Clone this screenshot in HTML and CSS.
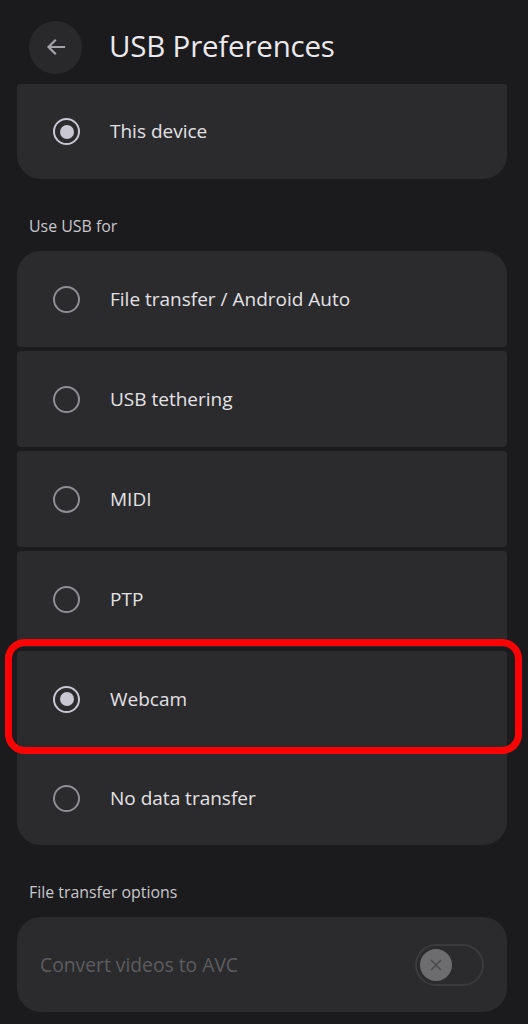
FILE: index.html
```html
<!DOCTYPE html>
<html>
<head>
<meta charset="utf-8">
<link rel="stylesheet" href="styles.css">
</head>
<body>
<div class="screen">
  <header class="topbar">
    <div class="back">
      <svg width="24" height="24" viewBox="0 0 24 24"><path d="M20 12H5M11 5.5L4.5 12L11 18.5" fill="none" stroke="#a4a3a8" stroke-width="2.2" stroke-linecap="square"/></svg>
    </div>
    <h1 class="title">USB Preferences</h1>
  </header>

  <div class="card single">
    <div class="row">
      <span class="radio on"></span>
      <span class="label">This device</span>
    </div>
  </div>

  <div class="section first">Use USB for</div>

  <div class="group">
    <div class="row item top"><span class="radio"></span><span class="label">File transfer / Android Auto</span></div>
    <div class="row item"><span class="radio"></span><span class="label">USB tethering</span></div>
    <div class="row item"><span class="radio"></span><span class="label">MIDI</span></div>
    <div class="row item"><span class="radio"></span><span class="label">PTP</span></div>
    <div class="row item marked"><span class="radio on"></span><span class="label">Webcam</span></div>
    <div class="row item bottom"><span class="radio"></span><span class="label">No data transfer</span></div>
  </div>

  <div class="section second">File transfer options</div>

  <div class="card toggle-card">
    <span class="dim">Convert videos to AVC</span>
    <span class="switch"><span class="thumb"><svg width="14" height="14" viewBox="0 0 14 14"><path d="M2 2L12 12M12 2L2 12" stroke="#4b4b4e" stroke-width="1.6"/></svg></span></span>
  </div>
</div>
</body>
</html>
```

FILE: styles.css
```css
html, body {
  margin: 0;
  padding: 0;
  background: #1b1b1d;
}
body {
  font-family: "Open Sans", Roboto, sans-serif;
  color: #e4e2e7;
}
.screen {
  width: 528px;
  height: 1024px;
  overflow: hidden;
  display: flex;
  flex-direction: column;
}
.topbar {
  height: 84px;
  display: flex;
  align-items: center;
  padding-left: 29px;
  box-sizing: border-box;
}
.back {
  width: 53px;
  height: 53px;
  border-radius: 50%;
  background: #29292b;
  display: flex;
  align-items: center;
  justify-content: center;
  margin-top: 10px;
}
.title {
  margin: 6px 0 0 27px;
  font-size: 29.5px;
  font-weight: 400;
  color: #ebe9ee;
  letter-spacing: -0.2px;
}
.card, .group {
  margin: 0 21px 0 17px;
}
.card {
  background: #2b2b2d;
}
.single {
  border-radius: 3px 3px 24px 24px;
  height: 95px;
  display: flex;
}
.row {
  display: flex;
  align-items: center;
  padding-left: 36px;
  box-sizing: border-box;
  width: 100%;
}
.radio {
  width: 27px;
  height: 27px;
  box-sizing: border-box;
  border: 2.6px solid #8f8e93;
  border-radius: 50%;
  flex: none;
  display: flex;
  align-items: center;
  justify-content: center;
}
.radio.on {
  border-color: #c9c7d2;
}
.radio.on::after {
  content: "";
  width: 14px;
  height: 14px;
  border-radius: 50%;
  background: #c9c7d2;
}
.label {
  margin-left: 30px;
  margin-bottom: 1px;
  font-size: 19px;
  color: #e4e2e7;
}
.section {
  font-size: 15.9px;
  color: #c8c7cc;
  padding-left: 29px;
  line-height: 20px;
}
.section.first {
  padding-top: 37px;
  padding-bottom: 15px;
}
.section.second {
  padding-top: 37px;
  padding-bottom: 15px;
}
.group {
  display: flex;
  flex-direction: column;
  gap: 4px;
}
.item {
  height: 96px;
  background: #2b2b2d;
  border-radius: 4px;
}
.item.top {
  border-radius: 24px 24px 4px 4px;
}
.item.bottom {
  border-radius: 4px 4px 24px 24px;
  height: 94px;
}
.marked {
  position: relative;
}
.marked::after {
  content: "";
  position: absolute;
  left: -12px;
  right: -15px;
  top: -12px;
  bottom: -7px;
  border: 7px solid #ff0000;
  border-radius: 20px;
  pointer-events: none;
}
.toggle-card {
  border-radius: 24px;
  height: 95px;
  display: flex;
  align-items: center;
  justify-content: space-between;
  padding: 0 23px 0 23px;
  box-sizing: border-box;
}
.dim {
  font-size: 19.3px;
  margin-bottom: 1px;
  color: #5d5d60;
}
.switch {
  width: 69px;
  height: 42px;
  box-sizing: border-box;
  border: 2px solid #3b3b3e;
  border-radius: 21px;
  display: flex;
  align-items: center;
  padding-left: 3px;
}
.thumb {
  width: 32px;
  height: 32px;
  border-radius: 50%;
  background: #6d6d70;
  display: flex;
  align-items: center;
  justify-content: center;
}
```
